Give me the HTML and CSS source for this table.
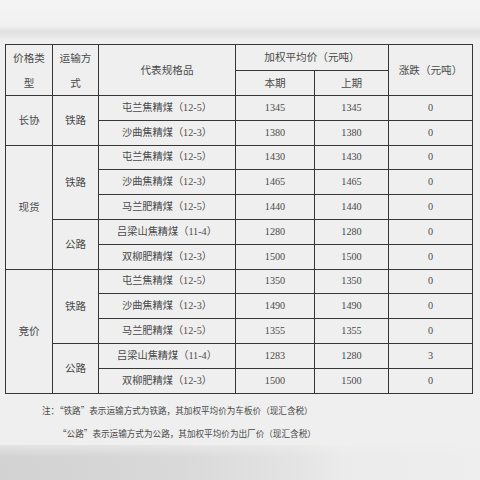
FILE: index.html
```html
<!DOCTYPE html>
<html lang="zh">
<head>
<meta charset="utf-8">
<link rel="stylesheet" href="styles.css">
</head>
<body>
<div class="page">
  <div class="topband"></div>
  <div class="content">
    <table class="price">
      <colgroup>
        <col class="c1"><col class="c2"><col class="c3"><col class="c4"><col class="c5"><col class="c6">
      </colgroup>
      <tr class="hrow">
        <th rowspan="2" class="two">价格类<br>型</th>
        <th rowspan="2" class="two">运输方<br>式</th>
        <th rowspan="2">代表规格品</th>
        <th colspan="2">加权平均价（元吨）</th>
        <th rowspan="2">涨跌（元吨）</th>
      </tr>
      <tr class="hrow">
        <th>本期</th>
        <th>上期</th>
      </tr>
      <tr>
        <td rowspan="2" class="cjk">长协</td>
        <td rowspan="2" class="cjk">铁路</td>
        <td>屯兰焦精煤（12-5）</td><td>1345</td><td>1345</td><td>0</td>
      </tr>
      <tr><td>沙曲焦精煤（12-3）</td><td>1380</td><td>1380</td><td>0</td></tr>
      <tr>
        <td rowspan="5" class="cjk">现货</td>
        <td rowspan="3" class="cjk">铁路</td>
        <td>屯兰焦精煤（12-5）</td><td>1430</td><td>1430</td><td>0</td>
      </tr>
      <tr><td>沙曲焦精煤（12-3）</td><td>1465</td><td>1465</td><td>0</td></tr>
      <tr><td>马兰肥精煤（12-5）</td><td>1440</td><td>1440</td><td>0</td></tr>
      <tr>
        <td rowspan="2" class="cjk">公路</td>
        <td>吕梁山焦精煤（11-4）</td><td>1280</td><td>1280</td><td>0</td>
      </tr>
      <tr><td>双柳肥精煤（12-3）</td><td>1500</td><td>1500</td><td>0</td></tr>
      <tr>
        <td rowspan="5" class="cjk">竞价</td>
        <td rowspan="3" class="cjk">铁路</td>
        <td>屯兰焦精煤（12-5）</td><td>1350</td><td>1350</td><td>0</td>
      </tr>
      <tr><td>沙曲焦精煤（12-3）</td><td>1490</td><td>1490</td><td>0</td></tr>
      <tr><td>马兰肥精煤（12-5）</td><td>1355</td><td>1355</td><td>0</td></tr>
      <tr>
        <td rowspan="2" class="cjk">公路</td>
        <td>吕梁山焦精煤（11-4）</td><td>1283</td><td>1280</td><td>3</td>
      </tr>
      <tr><td>双柳肥精煤（12-3）</td><td>1500</td><td>1500</td><td>0</td></tr>
    </table>
    <div class="notes">
      <p class="note">注：“铁路”表示运输方式为铁路，其加权平均价为车板价（现汇含税）</p>
      <p class="note indent">“公路”表示运输方式为公路，其加权平均价为出厂价（现汇含税）</p>
    </div>
  </div>
  <div class="bottomband"></div>
</div>
</body>
</html>
```
FILE: styles.css
```css
html, body {
  margin: 0;
  padding: 0;
}
body {
  background: #efefef;
  font-family: "Liberation Serif", "Noto Sans CJK SC", serif;
  color: #4a4a4a;
}
.page {
  width: 480px;
  height: 480px;
  display: flex;
  flex-direction: column;
  overflow: hidden;
}
.topband {
  height: 44px;
  flex: none;
  background: linear-gradient(to bottom, #f4f4f4 0px, #f1f1f1 26px, #e2e2e2 31px, #e6e6e6 36px, #efefef 40px);
}
.content {
  flex: 1;
  padding-left: 5px;
}
.price {
  border-collapse: collapse;
  table-layout: fixed;
  width: 467px;
  background: #efefef;
}
.c1 { width: 47px; }
.c2 { width: 46px; }
.c3 { width: 137px; }
.c4 { width: 79px; }
.c5 { width: 74px; }
.c6 { width: 84px; }
.price th, .price td {
  border: 1px solid #363636;
  padding: 0;
  text-align: center;
  vertical-align: middle;
  font-weight: normal;
  font-size: 10.2px;
  line-height: 12px;
  color: #4a4a4a;
  white-space: nowrap;
}
.price th, .price td.cjk {
  font-family: "Noto Sans CJK SC", sans-serif;
  font-size: 10.6px;
}
.price th.two {
  line-height: 25px;
}
.price tr { height: 24.8px; }
.price tr.hrow { height: 25px; }
.notes {
  padding-top: 5px;
}
.note {
  margin: 0;
  font-family: "Noto Sans CJK SC", sans-serif;
  font-size: 8.6px;
  line-height: 23px;
  color: #4a4a4a;
  padding-left: 37px;
}
.note.indent {
  padding-left: 53px;
}
.bottomband {
  height: 40px;
  flex: none;
  background:
    linear-gradient(to bottom, rgba(239,239,239,0.6) 0px, rgba(239,239,239,0) 12px),
    linear-gradient(to right, #d2d2d2 0px, #d9d9d9 180px, #e4e4e4 300px, #ebebeb 340px, #eeeeee 480px);
}
```
